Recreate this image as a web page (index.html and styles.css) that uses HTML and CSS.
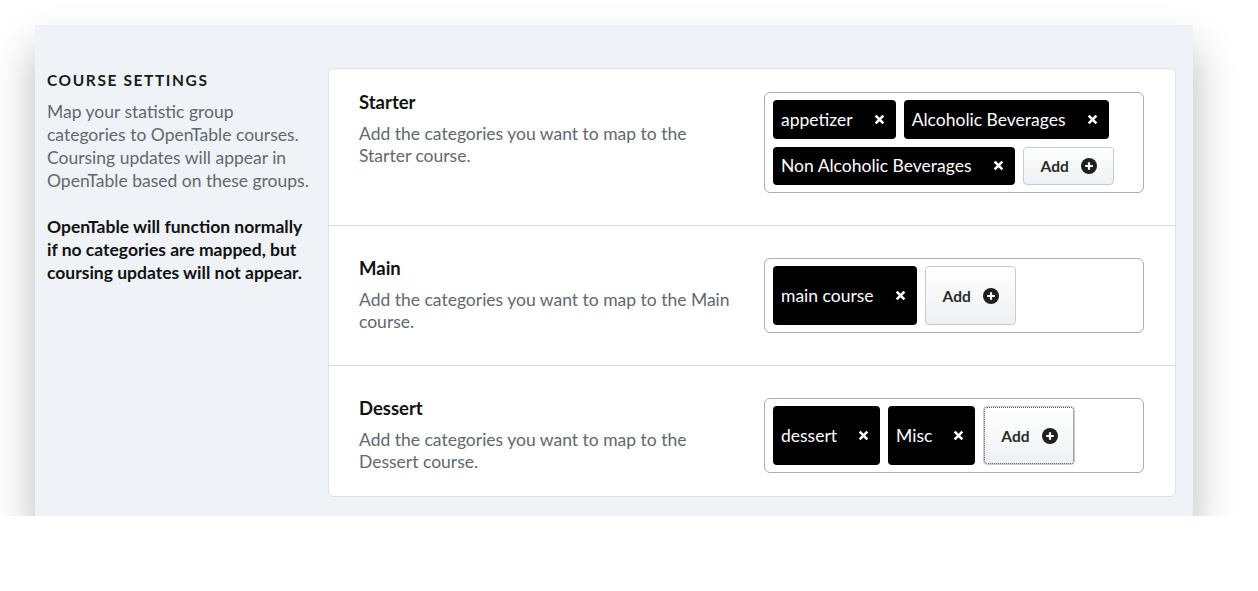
FILE: index.html
```html
<!DOCTYPE html>
<html lang="en">
  <head>
    <meta charset="UTF-8" />
    <meta name="viewport" content="width=device-width, initial-scale=1.0" />
    <title>Course Settings</title>
    <link rel="stylesheet" href="styles.css">
  </head>
  <body>
    <div class="panel">
      <div class="intro">
        <h2>Course Settings</h2>
        <p class="intro-text">
          Map your statistic group categories to OpenTable courses. Coursing
          updates will appear in OpenTable based on these groups.
        </p>
        <p class="intro-note">
          OpenTable will function normally if no categories are mapped, but
          coursing updates will not appear.
        </p>
      </div>

      <div class="card">
        <div class="course-row">
          <div class="course-info">
            <div class="course-title">Starter</div>
            <p class="course-desc">Add the categories you want to map to the Starter course.</p>
          </div>
          <div class="tag-box">
            <span class="tag">appetizer <svg class="tag-x" viewBox="0 0 10 10"><path d="M1.5 1.5l7 7M8.5 1.5l-7 7"/></svg></span>
            <span class="tag">Alcoholic Beverages <svg class="tag-x" viewBox="0 0 10 10"><path d="M1.5 1.5l7 7M8.5 1.5l-7 7"/></svg></span>
            <span class="tag">Non Alcoholic Beverages <svg class="tag-x" viewBox="0 0 10 10"><path d="M1.5 1.5l7 7M8.5 1.5l-7 7"/></svg></span>
            <button class="add-btn">Add <svg class="add-icon" viewBox="0 0 16 16"><circle cx="8" cy="8" r="8"/><path d="M8 4.2v7.6M4.2 8h7.6"/></svg></button>
          </div>
        </div>

        <div class="course-row">
          <div class="course-info">
            <div class="course-title">Main</div>
            <p class="course-desc">Add the categories you want to map to the Main course.</p>
          </div>
          <div class="tag-box">
            <span class="tag">main course <svg class="tag-x" viewBox="0 0 10 10"><path d="M1.5 1.5l7 7M8.5 1.5l-7 7"/></svg></span>
            <button class="add-btn">Add <svg class="add-icon" viewBox="0 0 16 16"><circle cx="8" cy="8" r="8"/><path d="M8 4.2v7.6M4.2 8h7.6"/></svg></button>
          </div>
        </div>

        <div class="course-row">
          <div class="course-info">
            <div class="course-title">Dessert</div>
            <p class="course-desc">Add the categories you want to map to the Dessert course.</p>
          </div>
          <div class="tag-box">
            <span class="tag">dessert <svg class="tag-x" viewBox="0 0 10 10"><path d="M1.5 1.5l7 7M8.5 1.5l-7 7"/></svg></span>
            <span class="tag">Misc <svg class="tag-x" viewBox="0 0 10 10"><path d="M1.5 1.5l7 7M8.5 1.5l-7 7"/></svg></span>
            <button class="add-btn focused">Add <svg class="add-icon" viewBox="0 0 16 16"><circle cx="8" cy="8" r="8"/><path d="M8 4.2v7.6M4.2 8h7.6"/></svg></button>
          </div>
        </div>
      </div>
    </div>
  </body>
</html>
```

FILE: styles.css
```css
body {
  font-family: Lato, "Liberation Sans", sans-serif;
  margin: 0;
  padding: 25px 0 0 35px;
  background-color: #ffffff;
  color: #111;
}

.panel {
  width: 1158px;
  box-sizing: border-box;
  display: flex;
  align-items: flex-start;
  padding: 43px 17px 19px 12px;
  background-color: #eff2f6;
  box-shadow: 0 24px 40px rgba(0, 0, 0, 0.28);
}

/* Left column */
.intro {
  width: 266px;
  flex-shrink: 0;
  margin-right: 15px;
  padding-top: 2px;
}
.intro h2 {
  margin: 0;
  font-size: 15.5px;
  line-height: 20px;
  font-weight: bold;
  text-transform: uppercase;
  letter-spacing: 1.6px;
  color: #1a1a1a;
}
.intro-text,
.intro-note {
  margin: 10px 0 0;
  font-size: 17.5px;
  line-height: 23px;
}
.intro-text {
  color: #62686f;
}
.intro-note {
  margin-top: 23px;
  font-weight: bold;
  color: #111;
}

/* Course card */
.card {
  flex: 1;
  background-color: #fff;
  border: 1px solid #dfe3e8;
  border-radius: 6px;
}
.course-row {
  display: flex;
  align-items: flex-start;
  gap: 26px;
  padding: 32px 31px 32px 30px;
  border-top: 1px solid #d9dde3;
}
.course-row:first-child {
  border-top: none;
  padding-top: 23px;
}
.course-row:last-child {
  padding-bottom: 23px;
}
.course-info {
  flex: 1;
}
.course-title {
  font-size: 18.5px;
  line-height: 20px;
  font-weight: bold;
  color: #111;
}
.course-desc {
  margin: 11px 0 0;
  font-size: 17.5px;
  line-height: 22px;
  color: #62686f;
}

/* Tag input */
.tag-box {
  width: 380px;
  min-height: 75px;
  box-sizing: border-box;
  display: flex;
  flex-wrap: wrap;
  gap: 8px;
  padding: 7px 8px;
  border: 1px solid #a9aeb5;
  border-radius: 6px;
}
.tag {
  display: flex;
  align-items: center;
  min-height: 38.5px;
  padding: 0 11px 0 8px;
  background-color: #000;
  color: #fff;
  font-size: 17.5px;
  border-radius: 4px;
}
.tag-x {
  width: 11px;
  height: 11px;
  margin-left: 21px;
  fill: none;
  stroke: #fff;
  stroke-width: 2.4;
}
.add-btn {
  display: flex;
  align-items: center;
  padding: 0 16px 0 17px;
  gap: 12px;
  font-family: inherit;
  font-size: 15.5px;
  font-weight: bold;
  color: #2b2b2b;
  background: linear-gradient(#ffffff, #eef1f4);
  border: 1px solid #c6cbd1;
  border-radius: 4px;
  cursor: pointer;
}
.add-btn.focused {
  outline: 1px dotted #555;
  outline-offset: -2px;
}
.add-icon {
  width: 16px;
  height: 16px;
}
.add-icon circle {
  fill: #1f1f1f;
}
.add-icon path {
  stroke: #fff;
  stroke-width: 2.2;
}
```
